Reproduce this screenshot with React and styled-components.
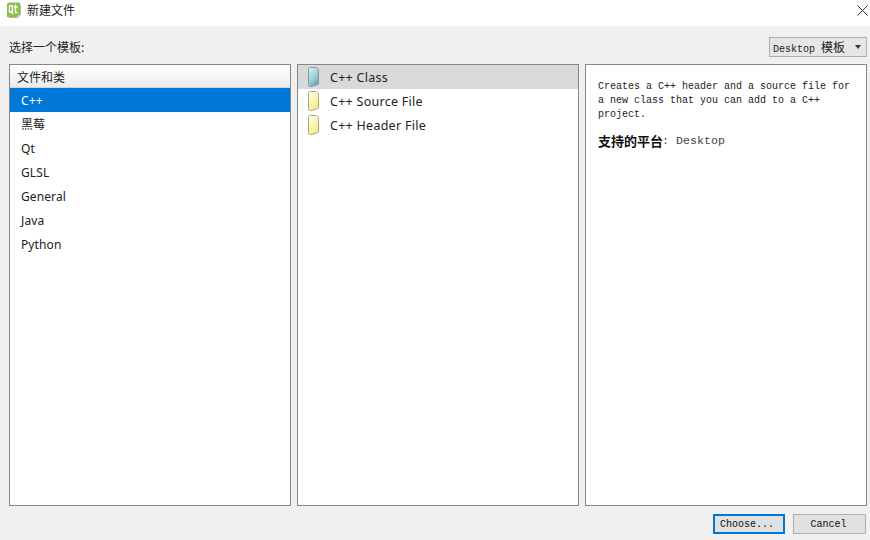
import React from "react";
import styled, { createGlobalStyle } from "styled-components";

const GlobalStyle = createGlobalStyle`
    html, body {
        margin: 0;
        padding: 0;
        background: #f0f0f0;
    }
    body {
        font-family: "Noto Sans", "Noto Sans CJK SC", sans-serif;
        color: #1a1a1a;
    }
`

const Dialog = styled.div`
    width: 870px;
    height: 540px;
    display: flex;
    flex-direction: column;
    background: #f0f0f0;
    overflow: hidden;
`

const TitleBar = styled.div`
    height: 26px;
    background: #fff;
    display: flex;
    align-items: center;
    padding: 0 2px 0 6px;
    gap: 6px;
    font-size: 12px;
    line-height: 20px;
    color: #222;
`

const TitleText = styled.span`
    flex: 1;
    margin-top: -6px;
    font-family: "Noto Sans CJK SC", sans-serif;
`

const TitleIcon = styled.svg`
    margin-top: -6px;
    flex: none;
`

const CloseIcon = styled.svg`
    margin-top: -6px;
    flex: none;
`

const TopRow = styled.div`
    height: 38px;
    display: flex;
    align-items: center;
    justify-content: space-between;
    padding: 3px 3px 0 9px;
    box-sizing: border-box;
`

const PromptLabel = styled.span`
    font-family: "Noto Sans CJK SC", sans-serif;
    font-size: 12px;
    color: #222;
`

const PlatformSelect = styled.div`
    width: 98px;
    height: 20px;
    box-sizing: border-box;
    border: 1px solid #adadad;
    background: #e6e6e6;
    display: flex;
    align-items: center;
    justify-content: space-between;
    padding: 0 5px 0 3px;
    font-family: "Liberation Mono", "Noto Sans CJK SC", monospace;
    font-size: 10px;
    color: #222;
`

const SelectCjk = styled.span`
    font-family: "Noto Sans CJK SC", sans-serif;
    font-size: 12px;
    margin-left: 6px;
`

const Caret = styled.span`
    width: 0;
    height: 0;
    border-left: 3.5px solid transparent;
    border-right: 3.5px solid transparent;
    border-top: 4px solid #333;
`

const Panels = styled.div`
    display: flex;
    gap: 6px;
    padding: 0 3px 0 9px;
    height: 442px;
`

const Panel = styled.div`
    flex: 1;
    box-sizing: border-box;
    background: #fff;
    border: 1px solid #828790;
    min-width: 0;
`

const HeaderCell = styled.div`
    height: 23px;
    box-sizing: border-box;
    padding: 0 7px;
    display: flex;
    align-items: center;
    font-family: "Noto Sans CJK SC", sans-serif;
    font-size: 12px;
    color: #222;
    border-bottom: 1px solid #d5d5d5;
    background: linear-gradient(#ffffff, #ececec);
`

const CategoryRow = styled.div`
    height: 24px;
    padding-left: 11px;
    display: flex;
    align-items: center;
    font-size: 12px;
    letter-spacing: 0.1px;
    background: ${props => (props.$selected ? "#0078d7" : "transparent")};
    color: ${props => (props.$selected ? "#fff" : "#222")};
`

const TemplateRow = styled.div`
    height: 24px;
    display: flex;
    align-items: center;
    gap: 10px;
    padding-left: 9px;
    font-size: 12.5px;
    letter-spacing: 0.27px;
    color: #222;
    background: ${props => (props.$selected ? "#d9d9d9" : "transparent")};
`

const Description = styled.div`
    padding: 15px 12px 0;
    font-family: "Liberation Mono", monospace;
    font-size: 10px;
    line-height: 14px;
    color: #222;
`

const Paragraph = styled.p`
    margin: 0 0 9px;
`

const PlatformLine = styled.div`
    display: flex;
    align-items: center;
    line-height: 20px;
`

const PlatformName = styled.b`
    font-family: "Noto Sans CJK SC", sans-serif;
    font-size: 13px;
    font-weight: 700;
    color: #111;
`

const PlatformValue = styled.span`
    font-size: 11.67px;
    color: #444;
    margin-left: -1px;
    white-space: pre;
`

const Footer = styled.div`
    flex: 1;
    display: flex;
    justify-content: flex-end;
    align-items: flex-start;
    gap: 8px;
    padding: 8px 4px 0 0;
`

const Button = styled.button`
    width: ${props => (props.$primary ? "72px" : "73px")};
    height: 20px;
    box-sizing: border-box;
    padding: ${props => (props.$primary ? "0 4px 0 0" : "0 2px 0 0")};
    background: #e1e1e1;
    border: ${props => (props.$primary ? "2px solid #0078d7" : "1px solid #adadad")};
    border-radius: 0;
    font-family: "Liberation Mono", monospace;
    font-size: 10px;
    color: #111;
`

function FileIcon({ light, mid, dark, stroke }) {
    const id = `grad-${mid.slice(1)}`
    return (
        <svg width="13" height="22" viewBox="0 0 13 22" style={{ flex: "none" }}>
            <defs>
                <linearGradient id={id} x1="0.1" y1="0" x2="0.7" y2="1">
                    <stop offset="0" stopColor={light} />
                    <stop offset="0.55" stopColor={mid} />
                    <stop offset="1" stopColor={dark} />
                </linearGradient>
            </defs>
            <path
                d="M3 1.5 H8.5 C10.5 1.5 11.5 3 11.5 5 V17 C11.5 18 11 18.5 10 18.8 L4 20.5 H3 C2.2 20.5 1.5 20 1.5 19 V3 C1.5 2 2.2 1.5 3 1.5 Z"
                fill={`url(#${id})`}
                stroke={stroke}
                strokeWidth="1"
            />
        </svg>
    )
}

const categories = ["C++", "黑莓", "Qt", "GLSL", "General", "Java", "Python"]

const templates = [
    { name: "C++ Class", light: "#d3eef2", mid: "#9fd2d6", dark: "#6f9fa8", stroke: "#8a979c", selected: true },
    { name: "C++ Source File", light: "#ffffff", mid: "#fbf6a4", dark: "#f3e98a", stroke: "#aaa58c" },
    { name: "C++ Header File", light: "#ffffff", mid: "#fbf6a8", dark: "#f3ea90", stroke: "#aaa58c" },
]

export default function App() {
    return (
        <Dialog>
            <GlobalStyle />
            <TitleBar>
                <TitleIcon width="15" height="16" viewBox="0 0 15 16">
                    <path d="M2.5 0.5 H14 V12 L11 15 H1 V2 Z" fill="#8cc04b" />
                    <path d="M14.5 3 V12.5 L11.5 15.5 H3" fill="none" stroke="#b5b5a8" strokeWidth="1" />
                    <path d="M3.5 4 H6.5 V10 H3.5 Z" fill="none" stroke="#fff" strokeWidth="1.3" />
                    <path d="M5.5 10 L7 12 M9.5 2.5 V10.5 H11.5 M8 5 H11.5" fill="none" stroke="#fff" strokeWidth="1.3" />
                </TitleIcon>
                <TitleText>新建文件</TitleText>
                <CloseIcon width="11" height="11" viewBox="0 0 11 11">
                    <path d="M0.5 0.5 L10.5 10.5 M10.5 0.5 L0.5 10.5" stroke="#333" strokeWidth="1" />
                </CloseIcon>
            </TitleBar>
            <TopRow>
                <PromptLabel>选择一个模板:</PromptLabel>
                <PlatformSelect>
                    <span>Desktop<SelectCjk>模板</SelectCjk></span>
                    <Caret />
                </PlatformSelect>
            </TopRow>
            <Panels>
                <Panel>
                    <HeaderCell>文件和类</HeaderCell>
                    {categories.map((name, i) => (
                        <CategoryRow key={name} $selected={i === 0}>{name}</CategoryRow>
                    ))}
                </Panel>
                <Panel>
                    {templates.map(item => (
                        <TemplateRow key={item.name} $selected={item.selected}>
                            <FileIcon light={item.light} mid={item.mid} dark={item.dark} stroke={item.stroke} />
                            {item.name}
                        </TemplateRow>
                    ))}
                </Panel>
                <Panel>
                    <Description>
                        <Paragraph>
                            Creates a C++ header and a source file for a new class that you can add to a C++ project.
                        </Paragraph>
                        <PlatformLine>
                            <PlatformName>支持的平台</PlatformName>
                            <PlatformValue>: Desktop</PlatformValue>
                        </PlatformLine>
                    </Description>
                </Panel>
            </Panels>
            <Footer>
                <Button $primary>Choose...</Button>
                <Button>Cancel</Button>
            </Footer>
        </Dialog>
    )
}
